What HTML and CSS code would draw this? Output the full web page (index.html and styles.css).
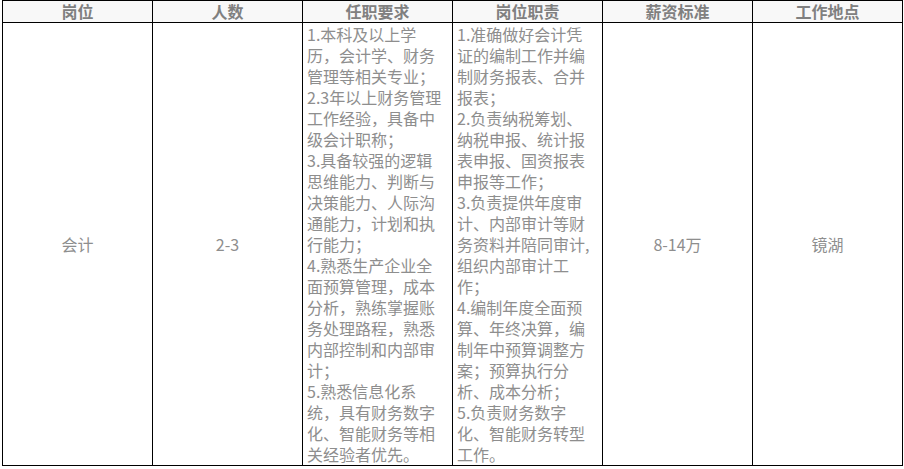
FILE: index.html
```html
<!DOCTYPE html>
<html lang="zh-CN">
<head>
<meta charset="utf-8">
<title>岗位</title>
<link rel="stylesheet" href="styles.css">
</head>
<body>
<table class="jobs">
  <colgroup>
    <col class="c"><col class="c"><col class="c"><col class="c"><col class="c"><col class="c">
  </colgroup>
  <thead>
    <tr>
      <th>岗位</th>
      <th>人数</th>
      <th>任职要求</th>
      <th>岗位职责</th>
      <th>薪资标准</th>
      <th>工作地点</th>
    </tr>
  </thead>
  <tbody>
    <tr>
      <td class="mid">会计</td>
      <td class="mid">2-3</td>
      <td class="txt">1.本科及以上学历，会计学、财务管理等相关专业；<br>2.3年以上财务管理工作经验，具备中级会计职称；<br>3.具备较强的逻辑思维能力、判断与决策能力、人际沟通能力，计划和执行能力；<br>4.熟悉生产企业全面预算管理，成本分析，熟练掌握账务处理路程，熟悉内部控制和内部审计；<br>5.熟悉信息化系统，具有财务数字化、智能财务等相关经验者优先。</td>
      <td class="txt">1.准确做好会计凭证的编制工作并编制财务报表、合并报表；<br>2.负责纳税筹划、纳税申报、统计报表申报、国资报表申报等工作；<br>3.负责提供年度审计、内部审计等财务资料并陪同审计,组织内部审计工作；<br>4.编制年度全面预算、年终决算，编制年中预算调整方案；预算执行分析、成本分析；<br>5.负责财务数字化、智能财务转型工作。</td>
      <td class="mid">8-14万</td>
      <td class="mid">镜湖</td>
    </tr>
  </tbody>
</table>
</body>
</html>
```

FILE: styles.css
```css
html, body {
  margin: 0;
  padding: 0;
  background: #ffffff;
}

body {
  font-family: "Noto Sans CJK SC", "Noto Sans", sans-serif;
  font-size: 16px;
  color: #8e8e8e;
}

.jobs {
  margin-left: 2px;
  border-collapse: collapse;
  table-layout: fixed;
  width: 901px;
}

.jobs .c {
  width: 150px;
}

.jobs th,
.jobs td {
  border: 1px solid #000;
}

.jobs th {
  height: 21px;
  padding: 0;
  line-height: 21px;
  font-weight: bold;
  color: #808080;
  background: #f8f8f8;
  text-align: center;
}

.jobs td {
  line-height: 21px;
  vertical-align: middle;
}

.jobs td.mid {
  text-align: center;
  padding: 0;
}

.jobs td.txt {
  text-align: left;
  padding: 1px 7px 0 4px;
  word-break: break-all;
  text-spacing-trim: space-all;
}
```
